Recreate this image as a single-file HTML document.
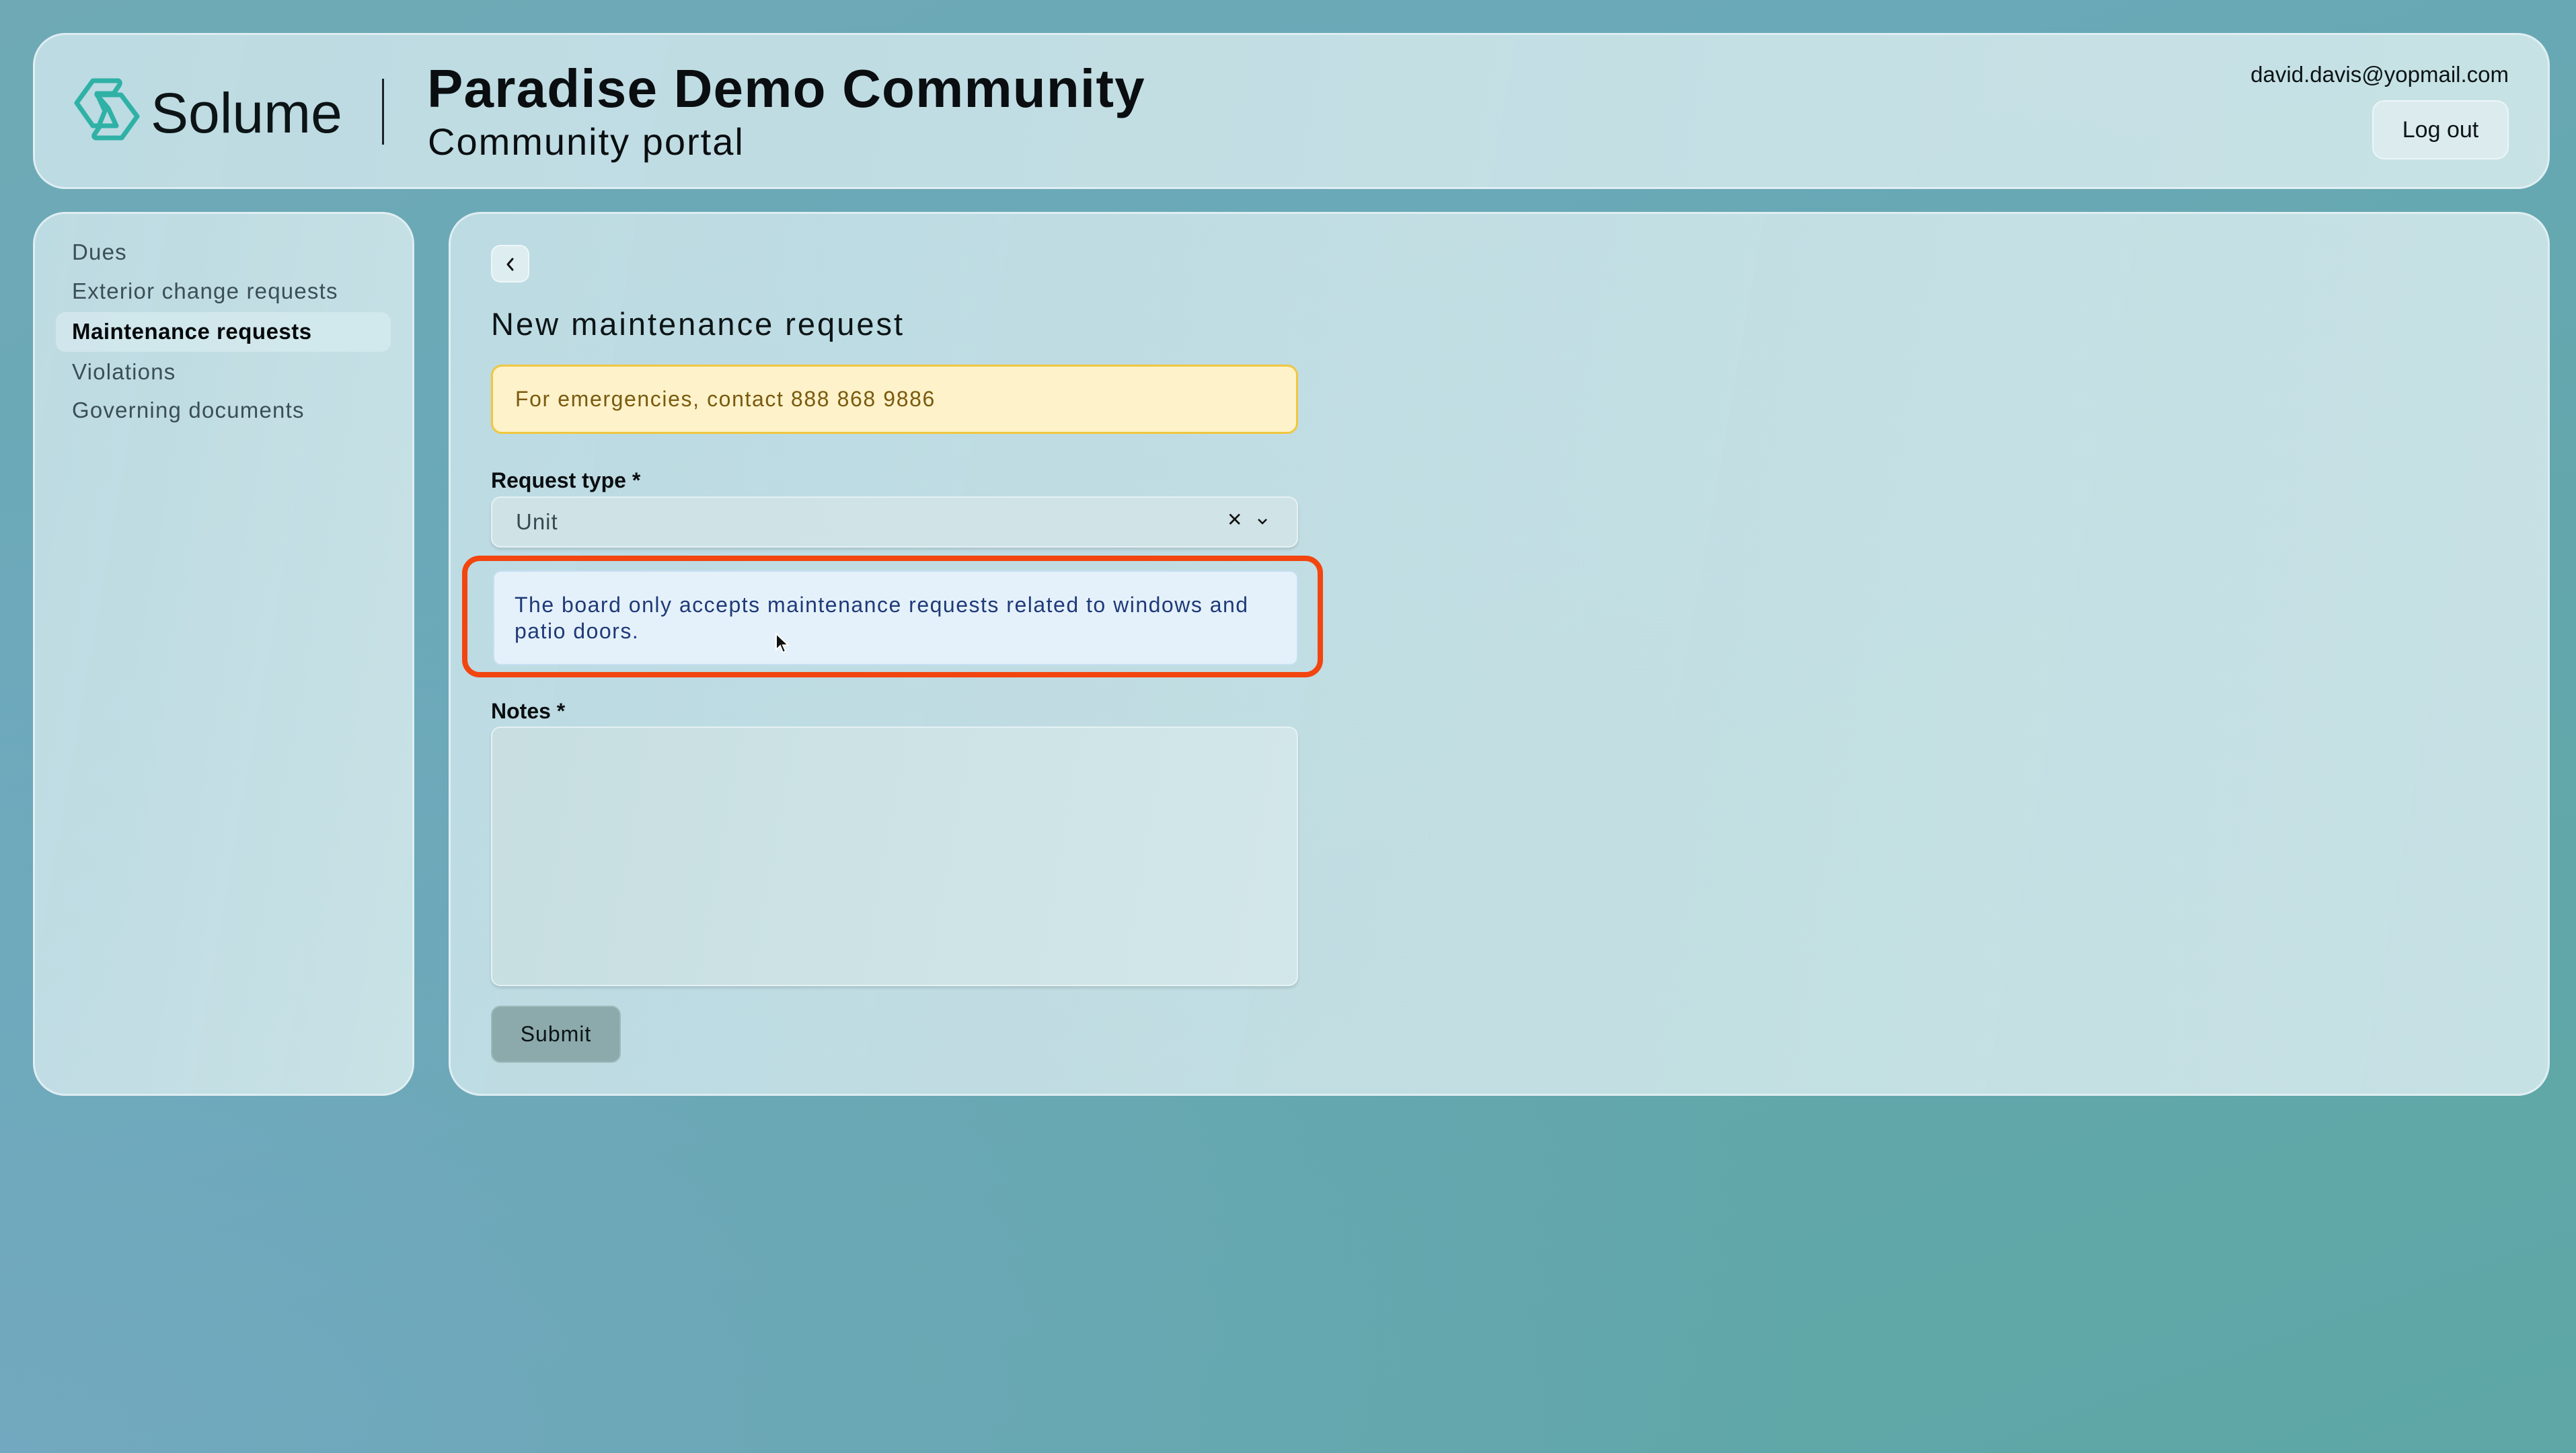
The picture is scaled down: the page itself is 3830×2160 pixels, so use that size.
<!DOCTYPE html>
<html><head><meta charset="utf-8"><style>
*{box-sizing:border-box;margin:0;padding:0}
body{width:3830px;height:2160px;overflow:hidden;font-family:"Liberation Sans",sans-serif;position:relative;
background:linear-gradient(160deg,#6fa9b6 0%,#6aa9b8 30%,#63a7ac 60%,#5ea7a6 100%);}
.bg2{position:absolute;inset:0;background:radial-gradient(ellipse at 0% 100%,rgba(125,170,205,.6),rgba(125,170,205,0) 50%);}
.card{position:absolute;border-radius:48px;background:linear-gradient(100deg,rgba(200,225,232,.88),rgba(210,232,234,.9));border:3px solid rgba(235,245,248,.7);}
.abs{position:absolute;white-space:nowrap}
.nav{position:absolute;left:107px;font-size:33px;color:#3b4e58;letter-spacing:1.2px}
</style></head><body>
<div class="bg2"></div>
<div class="card" style="left:49px;top:49px;width:3742px;height:232px"></div>
<svg class="abs" style="left:100px;top:105px" width="120" height="120" viewBox="0 0 120 120">
<g fill="none" stroke="#2fb1a6" stroke-width="7" stroke-linejoin="round">
<path d="M38,15 H76 Q80,17 77,22 L69,34 H44 L56,60 L47,82 H38 L14,48 Z"/>
<path d="M44,36 H80 L104,68 L81,100 H42 Q38,98 41,94 L49,82 H73 L61,56 Z"/>
</g></svg>
<div class="abs" style="left:224px;top:118px;font-size:84px;color:#0c1416;line-height:100px">Solume</div>
<div class="abs" style="left:568px;top:117px;width:3px;height:98px;background:#1a2226"></div>
<div class="abs" style="left:635px;top:82px;font-size:80px;font-weight:bold;color:#0a0e10;line-height:100px;letter-spacing:1.2px">Paradise Demo Community</div>
<div class="abs" style="left:636px;top:176px;font-size:56px;color:#0a0e10;line-height:70px;letter-spacing:2px">Community portal</div>
<div class="abs" style="right:100px;top:92px;font-size:33px;color:#0c1416">david.davis@yopmail.com</div>
<div class="abs" style="left:3527px;top:149px;width:203px;height:88px;border-radius:18px;background:rgba(228,240,242,.7);border:2px solid rgba(240,248,250,.8);font-size:34px;line-height:84px;text-align:center;color:#0c1416">Log out</div>

<div class="card" style="left:49px;top:315px;width:567px;height:1314px"></div>
<div class="abs" style="left:83px;top:464px;width:498px;height:59px;border-radius:14px;background:rgba(215,235,240,.7)"></div>
<div class="nav" style="top:356px">Dues</div>
<div class="nav" style="top:414px">Exterior change requests</div>
<div class="nav" style="top:474px;color:#05090b;font-weight:bold;letter-spacing:.5px">Maintenance requests</div>
<div class="nav" style="top:534px">Violations</div>
<div class="nav" style="top:591px">Governing documents</div>

<div class="card" style="left:667px;top:315px;width:3124px;height:1314px"></div>
<div class="abs" style="left:730px;top:364px;width:57px;height:56px;border-radius:14px;background:rgba(228,240,242,.85);border:2px solid rgba(240,248,250,.9)"></div>
<svg class="abs" style="left:748px;top:382px" width="22" height="22" viewBox="0 0 22 22"><path d="M14,3 L7,11 L14,19" fill="none" stroke="#111" stroke-width="3" stroke-linecap="round" stroke-linejoin="round"/></svg>
<div class="abs" style="left:730px;top:452px;font-size:47px;color:#0c1416;line-height:60px;letter-spacing:3px">New maintenance request</div>
<div class="abs" style="left:730px;top:542px;width:1200px;height:103px;border-radius:16px;background:#fdf2c9;border:3px solid #f0c640;font-size:32px;color:#7a5a10;line-height:97px;padding-left:33px;letter-spacing:1.6px">For emergencies, contact 888 868 9886</div>
<div class="abs" style="left:730px;top:696px;font-size:32px;font-weight:bold;color:#0a0e10">Request type *</div>
<div class="abs" style="left:730px;top:738px;width:1200px;height:76px;border-radius:14px;background:rgba(210,228,230,.85);border:2px solid rgba(235,245,248,.8);box-shadow:0 3px 4px rgba(0,0,0,.12);font-size:33px;color:#3a4a52;line-height:72px;padding-left:35px;letter-spacing:1px">Unit</div>
<div class="abs" style="left:1824px;top:756px;font-size:28px;color:#111">✕</div>
<svg class="abs" style="left:1868px;top:768px" width="18" height="14" viewBox="0 0 18 14"><path d="M3,4 L9,10 L15,4" fill="none" stroke="#111" stroke-width="2.5"/></svg>
<div class="abs" style="left:687px;top:826px;width:1280px;height:181px;border:8px solid #f2450f;border-radius:26px"></div>
<div class="abs" style="left:733px;top:848px;width:1197px;height:141px;border-radius:12px;background:#e5f1fa;border:2px solid #c6dff2"></div>
<div class="abs" style="left:765px;top:880px;font-size:32px;color:#1f3a78;line-height:39px;letter-spacing:1.5px">The board only accepts maintenance requests related to windows and<br>patio doors.</div>
<svg class="abs" style="left:1152px;top:940px" width="22" height="34" viewBox="0 0 22 34"><path d="M2,2 L2,26 L8,20 L12,30 L16,28 L12,19 L20,19 Z" fill="#111" stroke="#fff" stroke-width="2"/></svg>
<div class="abs" style="left:730px;top:1039px;font-size:32px;font-weight:bold;color:#0a0e10">Notes *</div>
<div class="abs" style="left:730px;top:1080px;width:1200px;height:386px;border-radius:14px;background:linear-gradient(100deg,rgba(200,222,224,.9),rgba(212,232,234,.9));border:2px solid rgba(235,245,248,.8);box-shadow:0 3px 4px rgba(0,0,0,.12)"></div>
<div class="abs" style="left:730px;top:1495px;width:193px;height:85px;border-radius:14px;background:#8caaac;border:2px solid #9dbabb;font-size:32px;color:#0c1416;text-align:center;line-height:81px;letter-spacing:1px">Submit</div>
</body></html>
